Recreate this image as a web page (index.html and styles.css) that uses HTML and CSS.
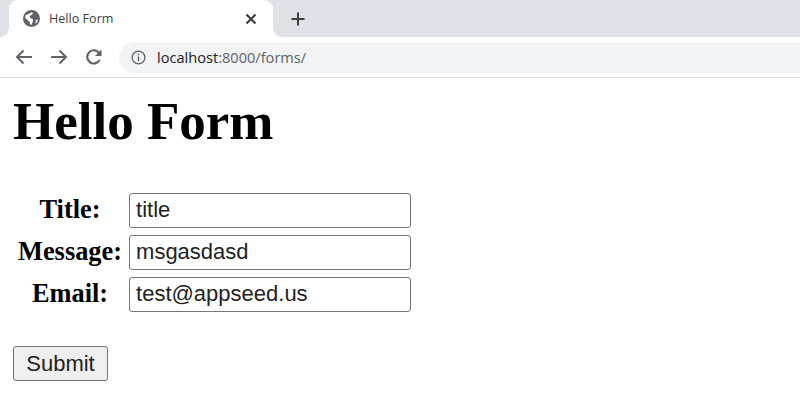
FILE: index.html
```html
<!DOCTYPE html>
<html lang="en">
<head>
  <meta charset="UTF-8">
  <title>Hello Form</title>
  <link rel="stylesheet" href="styles.css">
</head>
<body>

  <div class="tabstrip">
    <div class="tab">
      <svg class="favicon" viewBox="0 0 16 16" width="17" height="17">
        <circle cx="8" cy="8" r="8" fill="#5f6368"/>
        <path d="M2.5 5 L5.5 3.5 L8 2 L9.5 3 L8 4.8 L6 5.8 L7.5 8 L9.5 8.8 L9.2 11 L8 14 L6.8 13.5 L6.2 11 L4.2 9.5 L2 7.5 Z" fill="#fff"/>
        <path d="M12 9.5 L14 9 L13.2 11.8 L11.8 12.6 Z" fill="#fff"/>
      </svg>
      <span class="tab-title">Hello Form</span>
      <svg class="tab-close" viewBox="0 0 12 12" width="12" height="12">
        <path d="M1.5 1.5 L10.5 10.5 M10.5 1.5 L1.5 10.5" stroke="#3c4043" stroke-width="2.2" fill="none"/>
      </svg>
    </div>
    <svg class="new-tab" viewBox="0 0 14 14" width="14" height="14">
      <path d="M7 0.5 V13.5 M0.5 7 H13.5" stroke="#3c4043" stroke-width="2" fill="none"/>
    </svg>
  </div>

  <div class="toolbar">
    <svg class="nav-icon" viewBox="0 0 18 18" width="18" height="18">
      <path d="M17 9 H2 M8.5 2.5 L2 9 L8.5 15.5" stroke="#5f6368" stroke-width="2" fill="none"/>
    </svg>
    <svg class="nav-icon" viewBox="0 0 18 18" width="18" height="18">
      <path d="M1 9 H16 M9.5 2.5 L16 9 L9.5 15.5" stroke="#5f6368" stroke-width="2" fill="none"/>
    </svg>
    <svg class="nav-icon" viewBox="0 0 18 18" width="18" height="18">
      <path d="M14.6 12 A6.6 6.6 0 1 1 14.4 5.4" stroke="#5f6368" stroke-width="2.2" fill="none"/>
      <path d="M16.5 1.5 V8 H10 Z" fill="#5f6368"/>
    </svg>
    <div class="omnibox">
      <svg class="info-icon" viewBox="0 0 16 16" width="15" height="15">
        <circle cx="8" cy="8" r="6.8" stroke="#5f6368" stroke-width="1.4" fill="none"/>
        <path d="M8 7 V12 M8 4 V5.6" stroke="#5f6368" stroke-width="1.6" fill="none"/>
      </svg>
      <span class="url"><span class="url-host">localhost</span>:8000/forms/</span>
    </div>
  </div>

  <div class="page">
    <h1>Hello Form</h1>
    <form>
      <table>
        <tr>
          <th>Title:</th>
          <td><input type="text" value="title"></td>
        </tr>
        <tr>
          <th>Message:</th>
          <td><input type="text" value="msgasdasd"></td>
        </tr>
        <tr>
          <th>Email:</th>
          <td><input type="text" value="test@appseed.us"></td>
        </tr>
      </table>
      <button type="button">Submit</button>
    </form>
  </div>

</body>
</html>
```

FILE: styles.css
```css
html, body {
  margin: 0;
  height: 409px;
  overflow: hidden;
}

body {
  font-family: "Liberation Serif", serif;
  background-color: #fff;
  color: #000;
}

.tabstrip {
  display: flex;
  align-items: center;
  height: 37px;
  padding-left: 9px;
  background-color: #dee1e6;
}

.tab {
  position: relative;
  display: flex;
  align-items: center;
  width: 264px;
  height: 37px;
  padding: 0 16px 0 14px;
  box-sizing: border-box;
  background-color: #fff;
  border-radius: 9px 9px 0 0;
}

/* concave corners where the tab meets the toolbar */
.tab::before,
.tab::after {
  content: "";
  position: absolute;
  bottom: 0;
  width: 9px;
  height: 9px;
}

.tab::before {
  left: -9px;
  background: radial-gradient(circle at 0 0, #dee1e6 8.5px, #fff 9px);
}

.tab::after {
  right: -9px;
  background: radial-gradient(circle at 100% 0, #dee1e6 8.5px, #fff 9px);
}

.favicon {
  margin-right: 9px;
  margin-top: -1px;
}

.tab-title {
  flex: 1;
  font-family: "Open Sans", sans-serif;
  font-size: 12.6px;
  color: #3c4043;
}

.new-tab {
  margin-left: 18px;
}

.toolbar {
  display: flex;
  align-items: center;
  height: 41px;
  padding-left: 15px;
  box-sizing: border-box;
  background-color: #fff;
  border-bottom: 1px solid #dadce0;
}

.nav-icon {
  margin-right: 17px;
}

.nav-icon:nth-child(3) {
  margin-right: 16px;
}

.omnibox {
  display: flex;
  align-items: center;
  flex: 1;
  height: 31px;
  padding-left: 12px;
  background-color: #f1f3f4;
  border-radius: 16px 0 0 16px;
}

.info-icon {
  margin-right: 11px;
}

.url {
  font-family: "Open Sans", sans-serif;
  font-size: 14.6px;
  color: #5f6368;
}

.url-host {
  color: #202124;
}

.page {
  padding: 0 13px;
}

h1 {
  margin: 13px 0 35px;
  font-size: 53px;
  line-height: 60px;
  font-weight: bold;
}

table {
  border-collapse: separate;
  border-spacing: 3px 7px;
}

th {
  padding: 0 2px 2px;
  font-size: 26.4px;
  text-align: center;
}

td {
  padding: 0 0 0 2px;
}

input {
  display: block;
  width: 282px;
  height: 35px;
  box-sizing: border-box;
  padding: 0 6px 2px;
  font-family: "Liberation Sans", sans-serif;
  font-size: 22px;
  color: #222;
  background-color: #fff;
  border: 1px solid #767676;
  border-radius: 3px;
}

button {
  display: block;
  width: 95px;
  height: 35px;
  margin-top: 27px;
  padding: 0;
  font-family: "Liberation Sans", sans-serif;
  font-size: 22px;
  color: #222;
  background-color: #efefef;
  border: 1px solid #767676;
  border-radius: 3px;
}
```
